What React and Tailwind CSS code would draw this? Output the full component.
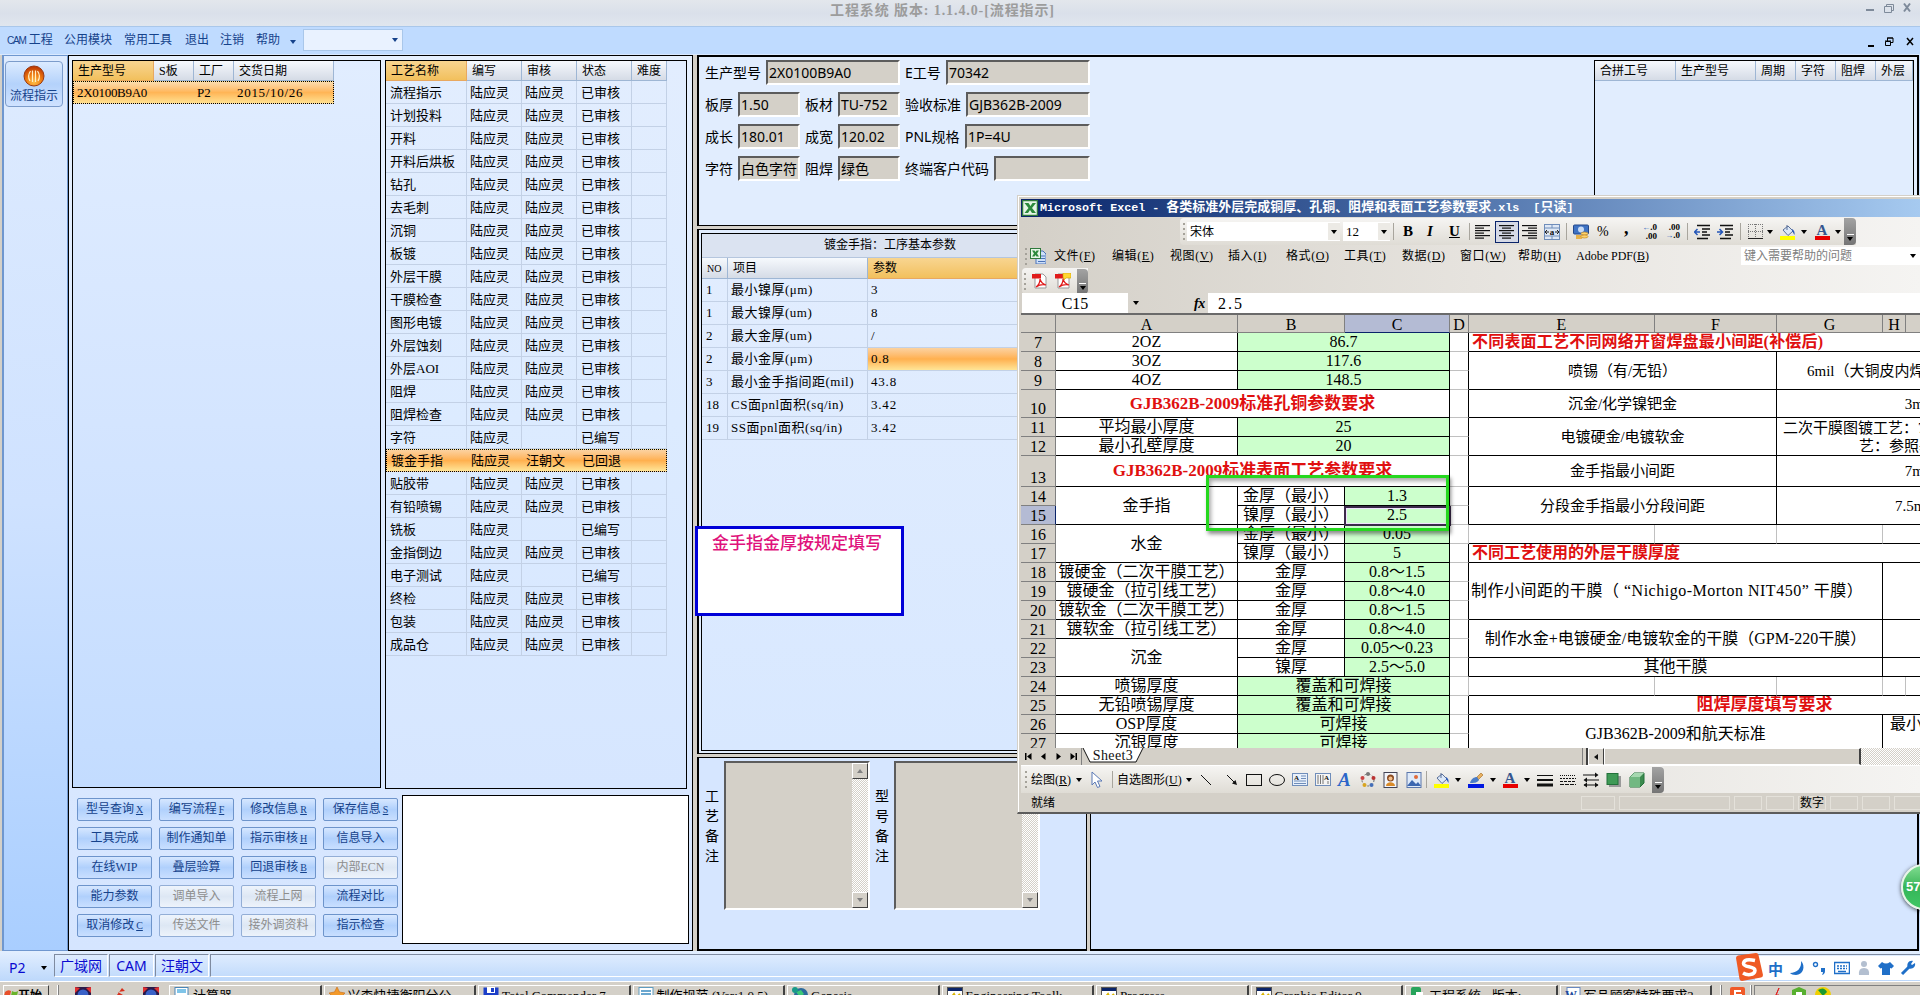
import React from 'react';

const processRows = [
    ['流程指示', '陆应灵', '陆应灵', '已审核'],
    ['计划投料', '陆应灵', '陆应灵', '已审核'],
    ['开料', '陆应灵', '陆应灵', '已审核'],
    ['开料后烘板', '陆应灵', '陆应灵', '已审核'],
    ['钻孔', '陆应灵', '陆应灵', '已审核'],
    ['去毛刺', '陆应灵', '陆应灵', '已审核'],
    ['沉铜', '陆应灵', '陆应灵', '已审核'],
    ['板镀', '陆应灵', '陆应灵', '已审核'],
    ['外层干膜', '陆应灵', '陆应灵', '已审核'],
    ['干膜检查', '陆应灵', '陆应灵', '已审核'],
    ['图形电镀', '陆应灵', '陆应灵', '已审核'],
    ['外层蚀刻', '陆应灵', '陆应灵', '已审核'],
    ['外层AOI', '陆应灵', '陆应灵', '已审核'],
    ['阻焊', '陆应灵', '陆应灵', '已审核'],
    ['阻焊检查', '陆应灵', '陆应灵', '已审核'],
    ['字符', '陆应灵', '', '已编写'],
    ['镀金手指', '陆应灵', '汪朝文', '已回退'],
    ['贴胶带', '陆应灵', '陆应灵', '已审核'],
    ['有铅喷锡', '陆应灵', '陆应灵', '已审核'],
    ['铣板', '陆应灵', '', '已编写'],
    ['金指倒边', '陆应灵', '陆应灵', '已审核'],
    ['电子测试', '陆应灵', '', '已编写'],
    ['终检', '陆应灵', '陆应灵', '已审核'],
    ['包装', '陆应灵', '陆应灵', '已审核'],
    ['成品仓', '陆应灵', '陆应灵', '已审核'],
];

const paramRows = [
    ['1', '最小镍厚(μm)', '3'],
    ['1', '最大镍厚(um)', '8'],
    ['2', '最大金厚(um)', '/'],
    ['2', '最小金厚(μm)', '0.8'],
    ['3', '最小金手指间距(mil)', '43.8'],
    ['18', 'CS面pnl面积(sq/in)', '3.42'],
    ['19', 'SS面pnl面积(sq/in)', '3.42'],
];

// label, access key, disabled
const actions = [
    ['型号查询', 'X'], ['编写流程', 'F'], ['修改信息', 'R'], ['保存信息', 'S'],
    ['工具完成'], ['制作通知单'], ['指示审核', 'H'], ['信息导入'],
    ['在线WIP'], ['叠层验算'], ['回退审核', 'B'], ['内部ECN', '', true],
    ['能力参数'], ['调单导入', '', true], ['流程上网', '', true], ['流程对比'],
    ['取消修改', 'C'], ['传送文件', '', true], ['接外调资料', '', true], ['指示检查'],
];

const excelMenus = [
    ['文件', 'F'], ['编辑', 'E'], ['视图', 'V'], ['插入', 'I'], ['格式', 'O'],
    ['工具', 'T'], ['数据', 'D'], ['窗口', 'W'], ['帮助', 'H'],
];

const G = 'bg-[#ccffcc] border-black';
const K = 'border-black';
const R = 'border-black text-[#e01010] font-bold text-[17px]';
const S = 'border-black text-[15px]';

// row, row span, column (A = 2), column span, text, classes
const cells = [
    [7, 1, 2, 1, '2OZ', K], [7, 1, 3, 2, '86.7', G],
    [8, 1, 2, 1, '3OZ', K], [8, 1, 3, 2, '117.6', G],
    [9, 1, 2, 1, '4OZ', K], [9, 1, 3, 2, '148.5', G],
    [10, 1, 2, 3, 'GJB362B-2009标准孔铜参数要求', R],
    [11, 1, 2, 1, '平均最小厚度', K], [11, 1, 3, 2, '25', G],
    [12, 1, 2, 1, '最小孔壁厚度', K], [12, 1, 3, 2, '20', G],
    [13, 1, 2, 3, 'GJB362B-2009标准表面工艺参数要求', R],
    [14, 2, 2, 1, '金手指', K],
    [14, 1, 3, 1, '金厚（最小）', K], [14, 1, 4, 1, '1.3', G],
    [15, 1, 3, 1, '镍厚（最小）', K], [15, 1, 4, 1, '2.5', G],
    [16, 2, 2, 1, '水金', K],
    [16, 1, 3, 1, '金厚（最小）', K], [16, 1, 4, 1, '0.05', G],
    [17, 1, 3, 1, '镍厚（最小）', K], [17, 1, 4, 1, '5', G],
    [18, 1, 2, 1, '镀硬金（二次干膜工艺）', K], [18, 1, 3, 1, '金厚', K], [18, 1, 4, 1, '0.8～1.5', G],
    [19, 1, 2, 1, '镀硬金（拉引线工艺）', K], [19, 1, 3, 1, '金厚', K], [19, 1, 4, 1, '0.8～4.0', G],
    [20, 1, 2, 1, '镀软金（二次干膜工艺）', K], [20, 1, 3, 1, '金厚', K], [20, 1, 4, 1, '0.8～1.5', G],
    [21, 1, 2, 1, '镀软金（拉引线工艺）', K], [21, 1, 3, 1, '金厚', K], [21, 1, 4, 1, '0.8～4.0', G],
    [22, 2, 2, 1, '沉金', K],
    [22, 1, 3, 1, '金厚', K], [22, 1, 4, 1, '0.05～0.23', G],
    [23, 1, 3, 1, '镍厚', K], [23, 1, 4, 1, '2.5～5.0', G],
    [24, 1, 2, 1, '喷锡厚度', K], [24, 1, 3, 2, '覆盖和可焊接', G],
    [25, 1, 2, 1, '无铅喷锡厚度', K], [25, 1, 3, 2, '覆盖和可焊接', G],
    [26, 1, 2, 1, 'OSP厚度', K], [26, 1, 3, 2, '可焊接', G],
    [27, 1, 2, 1, '沉银厚度', K], [27, 1, 3, 2, '可焊接', G],
    // right-hand tables
    [7, 1, 6, 5, '不同表面工艺不同网络开窗焊盘最小间距(补偿后)', 'border-black text-[#e01010] font-bold justify-start pl-[3px] tracking-[0.2px]'],
    [8, 2, 6, 2, '喷锡（有/无铅）', S], [8, 2, 8, 3, '6mil（大铜皮内焊盘除外）', 'border-black text-[15px] justify-start pl-[30px]'],
    [10, 1, 6, 2, '沉金/化学镍钯金', S], [10, 1, 8, 3, '3mil', S],
    [11, 2, 6, 2, '电镀硬金/电镀软金', S],
    [13, 1, 6, 2, '金手指最小间距', S], [13, 1, 8, 3, '7mil', S],
    [14, 2, 6, 2, '分段金手指最小分段间距', S], [14, 2, 8, 3, '7.5mil', 'border-black text-[15px] pr-2'],
    [16, 1, 6, 1, '', 'border-r-[#c0c0c0] border-b-black'], [16, 1, 7, 1, '', 'border-r-[#c0c0c0] border-b-black'],
    [16, 1, 8, 1, '', 'border-r-[#c0c0c0] border-b-black'], [16, 1, 9, 2, '', 'border-r-[#c0c0c0] border-b-black'],
    [17, 1, 6, 5, '不同工艺使用的外层干膜厚度', 'border-black text-[#e01010] font-bold justify-start pl-[3px]'],
    [18, 3, 6, 3, '制作小间距的干膜（ “Nichigo-Morton NIT450” 干膜）', 'border-black justify-start pl-0.5 tracking-[0.5px]'], [18, 3, 9, 2, '', K],
    [21, 2, 6, 3, '制作水金+电镀硬金/电镀软金的干膜（GPM-220干膜）', K], [21, 2, 9, 2, '', K],
    [23, 1, 6, 3, '其他干膜', K], [23, 1, 9, 2, '', K],
    [24, 1, 6, 1, '', 'border-r-[#c0c0c0] border-b-black'], [24, 1, 7, 1, '', 'border-r-[#c0c0c0] border-b-black'],
    [24, 1, 8, 1, '', 'border-r-[#c0c0c0] border-b-black'], [24, 1, 9, 1, '', 'border-r-[#c0c0c0] border-b-black'], [24, 1, 10, 1, '', 'border-b-black'],
    [25, 1, 6, 5, '阻焊厚度填写要求', R],
    [26, 2, 6, 3, 'GJB362B-2009和航天标准', K], [26, 1, 9, 2, '最小', 'border-white justify-start pl-[7px]'],
];

const rowNumbers = [7, 8, 9, 10, 11, 12, 13, 14, 15, 16, 17, 18, 19, 20, 21, 22, 23, 24, 25, 26, 27];

const columns = [
    ['A', 'w-[182px]'], ['B', 'w-[107px]'], ['C', 'w-[105px]'], ['D', 'w-[19px]'], ['E', 'w-[186px]'],
    ['F', 'w-[122px]'], ['G', 'w-[106px]'], ['H', 'w-[23px]'], ['', 'w-[155px]'],
];

const tasks = [
    ['calc', '计算器'], ['star', '兴森快捷衡阳分公'], ['disk', 'Total Commander 7.'], ['doc', '制作规范 (Ver:1.0.5)'],
    ['globe', 'Genesis'], ['win', 'Engineering Toolk'], ['win', 'Progress'], ['win', 'Graphic Editor 9.'],
    ['green', '工程系统 - 版本:'], ['word', '军品顾客特殊要求?'],
];

const Arrow = ({className = ''}) => (
    <svg className={`shrink-0 ${className}`} width="6" height="4" viewBox="0 0 6 4"><path d="M0 0h6L3 4z" fill="currentColor"/></svg>
);

const Sep = ({className = ''}) => <div className={`w-px h-[17px] shrink-0 bg-[#a8a59d] ${className}`}/>;

const Grip = ({className = ''}) => (
    <div className={`flex flex-col gap-[3px] shrink-0 ${className}`}>
        {[0, 1, 2, 3].map((i) => <div key={i} className="w-0.5 h-0.5 bg-[#a5a29a]"/>)}
    </div>
);

const EndCap = ({className = ''}) => (
    <div className={`shrink-0 rounded-r bg-gradient-to-b from-[#a3a3a3] to-[#757575] flex flex-col items-center justify-end pb-1 ${className}`}>
        <div className="w-[7px] h-px bg-white mb-0.5"/>
        <Arrow className="text-black"/>
    </div>
);

const Icon = ({className = '', children}) => (
    <svg className={`shrink-0 ${className}`} width="16" height="16" viewBox="0 0 16 16" fill="none">{children}</svg>
);

const AlignIcon = ({kind, className}) => (
    <Icon className={className}>
        {[1, 3.5, 6, 8.5, 11, 13.5].map((y, i) => {
            const w = i % 2 ? 9 : 15;
            const x = kind === 'left' ? 0 : kind === 'right' ? 15 - w : (15 - w) / 2;
            return <rect key={y} x={x} y={y} width={w} height="1.2" fill="#111"/>;
        })}
    </Icon>
);

const BucketIcon = ({className}) => (
    <Icon className={className}>
        <path d="M3 6l5-4 5 5-5 4.500z" fill="#dce8f8" stroke="#5a7099"/>
        <path d="M7 6V1" stroke="#5a7099"/>
        <path d="M12 5c2 1 3 3 2.500 6-1-1-1.500-3-2.500-4z" fill="#2a5bb8"/>
        <rect y="12" width="15" height="4" fill="#ffff00"/>
    </Icon>
);

const FontColorIcon = ({className}) => (
    <div className={`flex flex-col items-center w-4 h-4 shrink-0 ${className}`}>
        <span className="text-[15px] leading-[12px] font-bold text-[#35568f]">A</span>
        <div className="w-[15px] h-1 bg-[#e80000]"/>
    </div>
);

const ExcelIcon = ({className}) => (
    <Icon className={className}>
        <rect x="0.500" y="0.500" width="15" height="15" fill="#e6f5e6" stroke="#2f7a3c" strokeWidth="1.500"/>
        <path d="M2.500 3h4l2 3 2-3h3.500l-4 5 4 5h-4l-2-3-2 3H2.500l4-5z" fill="#2c8a3c"/>
    </Icon>
);

const WorkbookIcon = ({className}) => (
    <Icon className={className}>
        <path d="M6 3h7l3 3v10H6z" fill="#cfe0f8" stroke="#4a72b8"/>
        <path d="M11 8h4M11 10.500h4M8 13.500h7" stroke="#4a72b8"/>
        <rect x="0.500" y="0.500" width="10" height="10" fill="#e6f5e6" stroke="#2f7a3c"/>
        <path d="M2 2.500h2.500l1 1.500 1-1.500H9L7 5.500 9 8.500H6.500l-1-1.500-1 1.500H2l2-3z" fill="#2c8a3c"/>
    </Icon>
);

const PdfIcon = ({note, className}) => (
    <Icon className={className}>
        <path d="M3 1h8l3 3v11H3z" fill="#fff" stroke="#999"/>
        <rect y="1" width="9" height="4.500" fill="#e01b1b"/>
        <path d="M4 14c3-2 4-5 4-8 1 4 3 5 6 6-4-1-7 0-10 2z" stroke="#e01b1b" strokeWidth="1.200"/>
        {note && <path d="M8 0h8v5h-5l-2 2V5H8z" fill="#ffd732" stroke="#d0a000" strokeWidth="0.600"/>}
    </Icon>
);

const Field = ({label, value, className}) => (
    <div className={`flex items-center justify-between ${className}`}>
        <span className="shrink-0">{label}</span>
        {value}
    </div>
);

const Box = ({children, className}) => (
    <div className={`h-[25px] bg-[#d4d0c8] border-2 border-t-[#5c5c5c] border-l-[#5c5c5c] border-b-white border-r-white pl-px leading-[21px] whitespace-nowrap overflow-hidden ${className}`}>
        {children}
    </div>
);

const MemoBox = () => (
    <div className="w-[146px] h-[149px] bg-[#d4d0c8] border-2 border-t-[#5c5c5c] border-l-[#5c5c5c] border-b-white border-r-white flex justify-end">
        <div className="w-4 flex flex-col justify-between bg-[repeating-conic-gradient(#ffffff_0_25%,#d4d0c8_0_50%)] bg-[length:2px_2px]">
            <div className="h-4 bg-[#d4d0c8] border border-t-white border-l-white border-b-[#404040] border-r-[#404040] flex items-center justify-center text-[#808080]">
                <Arrow className="rotate-180"/>
            </div>
            <div className="h-4 bg-[#d4d0c8] border border-t-white border-l-white border-b-[#404040] border-r-[#404040] flex items-center justify-center text-[#808080]">
                <Arrow/>
            </div>
        </div>
    </div>
);

const VerticalLabel = ({text}) => (
    <div className="flex flex-col w-[14px] pt-[24px]">
        {text.split('').map((c) => <span key={c} className="h-5 leading-5">{c}</span>)}
    </div>
);

const Th = ({children, active, className}) => (
    <div className={`h-full flex items-center pl-[5px] border-r border-b overflow-hidden whitespace-nowrap ${active ? 'bg-gradient-to-b from-[#f8d590] to-[#f2c05c] border-[#e8a860]' : 'bg-gradient-to-b from-[#f6f9fd] to-[#d5dbe6] border-[#9eb6d4]'} ${className}`}>
        {children}
    </div>
);

const Sidebar = () => (
    <div className="w-[66px] shrink-0 border border-[#6f97cf] border-l-2 bg-gradient-to-b from-[#deebfe] via-[#cfe2ff] to-[#a9ceff] pt-[5px] px-px">
        <div className="w-[58px] h-[46px] rounded-sm border border-[#7c9ccb] bg-gradient-to-b from-[#dcebff] via-[#b4d2fb] to-[#cfe2ff] flex flex-col items-center pt-[3px] text-[#15428b] text-[12px]">
            <svg width="22" height="22" viewBox="0 0 22 22" className="shrink-0">
                <defs>
                    <radialGradient id="ball" cx="50%" cy="80%" r="80%">
                        <stop offset="0" stopColor="#ffc04a"/>
                        <stop offset="0.5" stopColor="#ee7a10"/>
                        <stop offset="1" stopColor="#b83000"/>
                    </radialGradient>
                </defs>
                <circle cx="11" cy="11" r="10" fill="url(#ball)" stroke="#9a3a10"/>
                <path d="M7 16Q4 11 7.500 6M9.500 17V5.500M12.500 17V5.500M15 16q3-5-.5-10" stroke="#fff0c8" strokeWidth="1.200" fill="none"/>
            </svg>
            <span className="leading-[18px]">流程指示</span>
        </div>
    </div>
);

const LeftPane = () => (
    <div className="w-[625px] shrink-0 border border-black bg-gradient-to-b from-[#e6f0fe] to-[#d5e5ff] pt-1 pl-[3px]">
        <div className="flex gap-1 text-[13px]">
            <div className="w-[309px] h-[728px] border border-black bg-gradient-to-b from-[#e1edff] via-[#d4e5ff] to-[#c3dcff]">
                <div className="flex h-5 w-[261px] text-[12px]">
                    <Th active className="w-[81px]">生产型号</Th>
                    <Th className="w-10">S板</Th>
                    <Th className="w-10">工厂</Th>
                    <Th className="w-[100px]">交货日期</Th>
                </div>
                <div className="flex items-center w-[261px] h-[23px] border border-dotted border-black bg-gradient-to-b from-[#fbdcae] via-[#ffb556] to-[#ffe08f] pl-[3px]">
                    <span className="w-[120px] tracking-[-0.3px]">2X0100B9A0</span>
                    <span className="w-10">P2</span>
                    <span className="tracking-[0.7px]">2015/10/26</span>
                </div>
            </div>
            <div className="w-[302px] h-[729px] border border-black bg-gradient-to-b from-[#e2edfe] via-[#dcebff] to-[#d6e6ff]">
                <div className="flex h-5 w-[281px] text-[12px]">
                    <Th active className="w-[81px]">工艺名称</Th>
                    <Th className="w-[55px]">编写</Th>
                    <Th className="w-[55px]">审核</Th>
                    <Th className="w-[55px]">状态</Th>
                    <Th className="w-[35px]">难度</Th>
                </div>
                {processRows.map((row, i) => (
                    <div
                        key={row[0]}
                        className={`flex w-[281px] h-[23px] ${i === 16 ? 'leading-[21px] border border-dotted border-black bg-gradient-to-b from-[#fbd2a0] via-[#ffb04e] to-[#ffe596]' : 'leading-[23px] divide-x divide-[#c3d1e6] border-b border-r border-[#c3d1e6]'}`}
                    >
                        <span className="w-[81px] pl-1">{row[0]}</span>
                        <span className="w-[55px] pl-[3px]">{row[1]}</span>
                        <span className="w-[55px] pl-[3px]">{row[2]}</span>
                        <span className="w-[55px] pl-1">{row[3]}</span>
                        <span/>
                    </div>
                ))}
            </div>
        </div>
        <div className="flex pt-[6px]">
            <div className="grid grid-cols-[repeat(4,75px)] auto-rows-[23px] gap-x-[7px] gap-y-[6px] pl-[5px] pt-[3px] text-[12px]">
                {actions.map(([label, hotkey, disabled]) => (
                    <button
                        key={label}
                        className={`rounded-xs border whitespace-nowrap leading-[19px] ${disabled ? 'border-[#93aed6] bg-gradient-to-b from-[#eef4fc] via-[#dde7f4] to-[#edf3fb] text-[#8d8d8d]' : 'border-[#6d94cb] bg-gradient-to-b from-[#d6e7ff] via-[#b0d0fc] to-[#c9dfff] text-[#15428b]'}`}
                    >
                        {label}{hotkey && <span className="underline ml-0.5 text-[10px]">{hotkey}</span>}
                    </button>
                ))}
            </div>
            <div className="w-[287px] h-[149px] ml-1 bg-white border border-black"/>
        </div>
    </div>
);

const InfoPanel = () => (
    <div className="h-[171px] flex justify-between border-2 border-b border-black bg-[#e1edfe] pt-[3px] pr-[3px] text-[14px] font-['Noto_Sans','Noto_Sans_CJK_SC',sans-serif]">
        <div className="flex flex-col gap-[7px] pl-[6px] w-[391px]">
            <div className="flex gap-[5px]">
                <Field className="w-[195px]" label="生产型号" value={<Box className="w-[134px]">2X0100B9A0</Box>}/>
                <Field className="w-[185px]" label="E工号" value={<Box className="w-[144px]">70342</Box>}/>
            </div>
            <div className="flex gap-[5px]">
                <Field className="w-[95px]" label="板厚" value={<Box className="w-[62px]">1.50</Box>}/>
                <Field className="w-[95px]" label="板材" value={<Box className="w-[62px]">TU-752</Box>}/>
                <Field className="w-[185px]" label="验收标准" value={<Box className="w-[124px]">GJB362B-2009</Box>}/>
            </div>
            <div className="flex gap-[5px]">
                <Field className="w-[95px]" label="成长" value={<Box className="w-[62px]">180.01</Box>}/>
                <Field className="w-[95px]" label="成宽" value={<Box className="w-[62px]">120.02</Box>}/>
                <Field className="w-[185px]" label="PNL规格" value={<Box className="w-[125px]">1P=4U</Box>}/>
            </div>
            <div className="flex gap-[5px]">
                <Field className="w-[95px]" label="字符" value={<Box className="w-[62px]">白色字符</Box>}/>
                <Field className="w-[95px]" label="阻焊" value={<Box className="w-[62px]">绿色</Box>}/>
                <Field className="w-[185px]" label="终端客户代码" value={<Box className="w-[96px]"/>}/>
            </div>
        </div>
        <div className="w-[320px] h-[160px] border border-black text-[12px] font-['Liberation_Serif','Noto_Sans_CJK_SC',serif]">
            <div className="flex h-5">
                <Th className="w-[81px]">合拼工号</Th>
                <Th className="w-20">生产型号</Th>
                <Th className="w-10">周期</Th>
                <Th className="w-10">字符</Th>
                <Th className="w-10">阻焊</Th>
                <Th className="flex-1">外层</Th>
            </div>
        </div>
    </div>
);

const ParamPanel = () => (
    <div className="h-[525px] border-2 border-y border-black bg-[#e1edfe] pt-[3px] pl-0.5 text-[13px]">
        <div className="w-[1210px] h-[518px] border border-black bg-gradient-to-b from-[#e2edfe] to-[#d8e8ff]">
            <div className="w-[376px] h-6 text-center text-[12px] leading-[23px] bg-[#dbe3f1] border-b border-[#b5c6de]">镀金手指：工序基本参数</div>
            <div className="flex w-[376px] h-[21px] text-[12px]">
                <Th className="w-[26px]"><span className="text-[10px]">NO</span></Th>
                <Th className="w-[140px]">项目</Th>
                <Th active className="w-[210px]">参数</Th>
            </div>
            {paramRows.map(([no, name, value], i) => (
                <div key={name} className="flex w-[376px] h-[23px] leading-[22px] divide-x divide-[#c3d1e6] border-b border-[#c3d1e6] whitespace-nowrap">
                    <span className="w-[26px] pl-1">{no}</span>
                    <span className="w-[140px] pl-[3px] tracking-[0.5px]">{name}</span>
                    <span className={`w-[210px] pl-[3px] tracking-[0.8px] ${i === 3 ? 'bg-gradient-to-b from-[#fbd2a0] via-[#ffb04e] to-[#ffe596]' : ''}`}>{value}</span>
                </div>
            ))}
        </div>
    </div>
);

const MemoPanels = () => (
    <div className="flex gap-[3px] flex-1 bg-[#d4d0c8]">
        <div className="w-[390px] flex border-2 border-t border-r border-black bg-[#d6e6ff] pl-[6px] pt-[3px] text-[14px] text-black font-['Noto_Sans_CJK_SC',sans-serif]">
            <VerticalLabel text="工艺备注"/>
            <div className="pl-[5px] pr-[5px]"><MemoBox/></div>
            <VerticalLabel text="型号备注"/>
            <div className="pl-[5px]"><MemoBox/></div>
        </div>
        <div className="flex-1 border-2 border-l border-black bg-[#d6e6ff]"/>
    </div>
);

const Sheet = () => (
    <div className="h-[435px] overflow-hidden bg-white text-[16px]">
        <div className="flex h-5 w-[1040px] border-t-2 border-[#6a6a6a] bg-[#d4d0c8] leading-[19px] text-center">
            <div className="w-[35px] shrink-0 border-r border-b border-[#808080]"/>
            {columns.map(([name, width]) => (
                <div key={name} className={`shrink-0 border-r border-b border-[#808080] ${name === 'C' ? 'bg-[#b4bbd4] border-b-[#0a246a]' : ''} ${width}`}>{name}</div>
            ))}
        </div>
        <div className="grid grid-cols-[35px_182px_107px_105px_19px_186px_122px_106px_23px_155px] grid-rows-[19px_19px_19px_28px_19px_19px_31px_repeat(14,19px)] w-[1040px]">
            {rowNumbers.map((n) => (
                <div
                    key={n}
                    style={{gridRow: n - 6, gridColumn: 1}}
                    className={`flex items-end justify-center border-r border-b border-[#808080] leading-[17px] ${n === 15 ? 'bg-[#b4bbd4] border-r-[#0a246a]' : 'bg-[#d4d0c8]'}`}
                >
                    {n}
                </div>
            ))}
            {rowNumbers.map((n) => (
                <div
                    key={`d${n}`}
                    style={{gridRow: n - 6, gridColumn: 5}}
                    className={`border-r border-b border-b-[#c0c0c0] ${n === 16 || n === 24 ? 'border-r-[#c0c0c0]' : 'border-r-black'}`}
                />
            ))}
            {cells.map(([row, rowSpan, col, colSpan, text, cls]) => (
                <div
                    key={`${row}-${col}`}
                    style={{gridRow: `${row - 6} / span ${rowSpan}`, gridColumn: `${col} / span ${colSpan}`}}
                    className={`flex items-center justify-center border-r border-b whitespace-nowrap overflow-hidden leading-[18px] ${cls}`}
                >
                    {text}
                </div>
            ))}
            <div className="row-start-5 row-span-2 col-start-8 col-span-3 border-b border-black text-[15px] leading-[21px] whitespace-nowrap">
                <div className="pl-[6px] h-[18px]">二次干膜图镀工艺：7mil</div>
                <div className="pl-[82px] h-[18px]">艺：参照基铜</div>
            </div>
        </div>
    </div>
);

const FormatBar = () => (
    <div className="h-[29px] flex items-center text-[12px]">
        <div className="ml-[159px] h-[27px] w-[676px] flex items-center bg-gradient-to-b from-[#f6f5f3] to-[#dfdcd5] rounded-l">
            <Grip className="ml-[3px]"/>
            <div className="ml-0.5 w-[153px] shrink-0 h-[19px] bg-white flex items-center justify-between pl-[3px]">
                宋体
                <span className="w-3 h-[17px] bg-[#eceae5] flex items-center justify-center"><Arrow/></span>
            </div>
            <div className="ml-[3px] w-[47px] shrink-0 h-[19px] bg-white flex items-center justify-between pl-[3px] text-[13px]">
                12
                <span className="w-3 h-[17px] bg-[#eceae5] flex items-center justify-center"><Arrow/></span>
            </div>
            <Sep className="ml-[3px]"/>
            <b className="ml-[9px] w-4 text-[15px]">B</b>
            <b className="ml-[8px] w-4 text-[15px] italic">I</b>
            <b className="ml-[6px] w-4 text-[15px] underline">U</b>
            <Sep className="ml-1"/>
            <AlignIcon kind="left" className="ml-[5px]"/>
            <span className="ml-1 w-6 h-[22px] border border-[#0a246a] bg-[#d5d9e6] flex items-center justify-center shrink-0"><AlignIcon kind="center"/></span>
            <AlignIcon kind="right" className="ml-[3px]"/>
            <Icon className="ml-1.5">
                <rect x="0.500" y="0.500" width="15" height="15" fill="#dfe8f5" stroke="#6f8dba"/>
                <path d="M0 4h16M0 12h16M8 0v4M8 12v4" stroke="#6f8dba"/>
                <path d="M1 8h4M11 8h4M3 6L1 8l2 2M13 6l2 2-2 2" stroke="#222"/>
                <text x="8" y="11" fontSize="9" fontWeight="bold" textAnchor="middle" fill="#111">a</text>
            </Icon>
            <Sep className="ml-1.5"/>
            <Icon className="ml-1.5">
                <rect x="0.500" y="1" width="15" height="9" rx="1" fill="#3f73c4" stroke="#25488a"/>
                <circle cx="8" cy="5.500" r="3" fill="#c8dbf5"/>
                <rect x="3" y="11" width="6" height="4" fill="#e8b24a"/>
                <ellipse cx="11.500" cy="9.500" rx="3.500" ry="1.500" fill="#ffd36a" stroke="#b57a1c" strokeWidth="0.600"/>
                <ellipse cx="11.500" cy="12.500" rx="3.500" ry="1.500" fill="#ffd36a" stroke="#b57a1c" strokeWidth="0.600"/>
            </Icon>
            <span className="ml-[8px] w-3 shrink-0 text-[14px]">%</span>
            <b className="ml-[15px] w-2 shrink-0 text-[18px] leading-none -mt-2">,</b>
            <div className="ml-[9px] w-4 shrink-0 text-[9px] leading-[8px] font-bold text-right"><span className="text-[8px] text-[#2456b8]">←</span>.0<br/>.00</div>
            <div className="ml-[7px] w-4 shrink-0 text-[9px] leading-[8px] font-bold text-right">.00<br/><span className="text-[8px] text-[#2456b8]">→</span>.0</div>
            <Sep className="ml-[7px]"/>
            <Icon className="ml-1.5">
                <path d="M3 1.500h13M8 5h8M8 8h5M8 11h8M3 14.500h11" stroke="#111" strokeWidth="1.500"/>
                <path d="M6 8H1M3.500 5L0.500 8l3 3" stroke="#2456b8" strokeWidth="1.500"/>
            </Icon>
            <Icon className="ml-[7px]">
                <path d="M3 1.500h13M8 5h8M8 8h5M8 11h8M3 14.500h11" stroke="#111" strokeWidth="1.500"/>
                <path d="M0 8h5M2.500 5l3 3-3 3" stroke="#2456b8" strokeWidth="1.500"/>
            </Icon>
            <Sep className="ml-[7px]"/>
            <Icon className="ml-[7px]">
                <path d="M0.500 0v15M7.500 0v15M14.500 0v15M0 0.500h15M0 7.500h15" stroke="#777" strokeDasharray="1 1"/>
                <path d="M0 14.500h15" stroke="#222"/>
            </Icon>
            <Arrow className="ml-[3px]"/>
            <BucketIcon className="ml-[7px]"/>
            <Arrow className="ml-[5px]"/>
            <FontColorIcon className="ml-[7px]"/>
            <Arrow className="ml-[5px]"/>
            <EndCap className="ml-auto w-3 h-[27px]"/>
        </div>
    </div>
);

const DrawBar = () => (
    <div className="h-[27px] w-[643px] flex items-center text-[12px] bg-gradient-to-b from-[#f6f5f3] to-[#dfdcd5] rounded-r">
        <Grip className="ml-1"/>
        <span className="ml-1 w-[42px]">绘图(<u>R</u>)</span>
        <Arrow className="ml-[3px]"/>
        <svg className="ml-2 shrink-0" width="14" height="18" viewBox="0 0 14 18"><path d="M2 1v13l3-3 2.500 5.500 2.500-1L7.500 10H12z" fill="#fff" stroke="#5a79b5"/></svg>
        <Sep className="ml-2"/>
        <span className="ml-1 w-[65px]">自选图形(<u>U</u>)</span>
        <Arrow className="ml-1"/>
        <Icon className="ml-1.5"><path d="M3 3l10 10" stroke="#111"/></Icon>
        <Icon className="ml-2.5"><path d="M3 3l8 8" stroke="#111"/><path d="M13 13l-5-1.500L11.500 8z" fill="#111"/></Icon>
        <Icon className="ml-1.5"><rect x="0.500" y="2.500" width="15" height="11" stroke="#111"/></Icon>
        <Icon className="ml-[7px]"><ellipse cx="8" cy="8" rx="7.500" ry="5.500" stroke="#111"/></Icon>
        <Icon className="ml-[7px]">
            <rect x="0.500" y="1.500" width="15" height="12" fill="#e8f0fb" stroke="#6f8dba"/>
            <path d="M9 4h5M9 6.500h5M2 9h12M2 11.500h12" stroke="#6f8dba"/>
            <text x="2" y="8" fontSize="7" fontWeight="bold" fill="#111">A</text>
        </Icon>
        <Icon className="ml-[7px]">
            <rect x="0.500" y="1.500" width="15" height="12" fill="#f4f4f4" stroke="#6f8dba"/>
            <path d="M3 3v9M5.500 3v9M8 3v9M13 9v3" stroke="#777"/>
            <text x="9" y="8" fontSize="7" fontWeight="bold" fill="#111">A</text>
        </Icon>
        <span className="ml-[7px] w-4 text-[19px] leading-none font-bold italic text-[#2c66c9]">A</span>
        <Icon className="ml-1.5">
            <circle cx="8" cy="8" r="6" stroke="#666" strokeDasharray="2 2"/>
            <circle cx="8" cy="2" r="2" fill="#777"/><circle cx="2.500" cy="6" r="2" fill="#c44"/>
            <circle cx="13.500" cy="6" r="2" fill="#b33"/><circle cx="4.500" cy="13" r="2" fill="#d9a520"/><circle cx="11.500" cy="13" r="2" fill="#456fb8"/>
        </Icon>
        <Icon className="ml-[7px]">
            <rect x="1" y="0.500" width="13" height="15" fill="#f3f5fa" stroke="#445"/>
            <circle cx="7.500" cy="6" r="3.500" fill="#8a4a20"/><circle cx="7.500" cy="6.500" r="2" fill="#f4bf8a"/>
            <path d="M3 14c0-5 9-5 9 0z" fill="#d98a28"/>
        </Icon>
        <Icon className="ml-[7px]">
            <rect x="1" y="0.500" width="14" height="15" fill="#dfeaf9" stroke="#5b77ab"/>
            <path d="M1 14l5-6 4 4 2-2 3 4z" fill="#3c67b0"/><circle cx="10" cy="5" r="2" fill="#e06a3a"/>
        </Icon>
        <Sep className="ml-1"/>
        <BucketIcon className="ml-[7px]"/>
        <Arrow className="ml-[5px]"/>
        <Icon className="ml-[7px]">
            <path d="M9 5l4-4 2 2-5 5z" fill="#e8b060" stroke="#a06a20" strokeWidth="0.600"/>
            <path d="M2 11c1-4 4-6 7-6l2 3c-2 3-5 3-9 3z" fill="#4a7cc8"/>
            <rect y="12" width="16" height="4" fill="#0018e0"/>
        </Icon>
        <Arrow className="ml-1.5"/>
        <FontColorIcon className="ml-1.5"/>
        <Arrow className="ml-1.5"/>
        <Icon className="ml-[7px]"><path d="M0 3.500h16" stroke="#111"/><path d="M0 8h16" stroke="#111" strokeWidth="2"/><path d="M0 13h16" stroke="#111" strokeWidth="3"/></Icon>
        <Icon className="ml-[7px]"><path d="M0 3.500h16" stroke="#111" strokeDasharray="1 1"/><path d="M0 6.500h16" stroke="#111" strokeDasharray="2 1"/><path d="M0 9.500h16" stroke="#111" strokeDasharray="3 1"/><path d="M0 12.500h16" stroke="#111" strokeDasharray="4 1"/></Icon>
        <Icon className="ml-[7px]">
            <path d="M0 3h14M2 8h14M1 13h14" stroke="#111" strokeWidth="1.200"/>
            <path d="M12 0.500L15.500 3 12 5.500zM4 5.500L0.500 8 4 10.500zM4 10.500L0.500 13 4 15.500zM12 10.500l3.500 2.500-3.500 2.500z" fill="#111"/>
        </Icon>
        <Icon className="ml-[7px]"><rect x="3" y="4" width="12" height="11" fill="#9a9a9a"/><rect x="1" y="1.500" width="11" height="11" fill="#3f9a56" stroke="#23703a"/></Icon>
        <Icon className="ml-[7px]"><path d="M1 5l4-4h10v10l-4 4H1z" fill="#3b8a4e" stroke="#23703a"/><path d="M1 5l4-4h10l-4 4z" fill="#a6d8b0"/><rect x="1" y="5" width="10" height="10" fill="#72b882"/></Icon>
        <EndCap className="ml-auto w-3 h-[26px]"/>
    </div>
);

const ExcelWindow = () => (
    <div className="absolute left-[1017px] top-[195px] w-[903px] h-[619px] overflow-hidden bg-[#d4d0c8] border-t border-l border-[#d4d0c8] border-b-2 border-b-[#5c5c5c] shadow-[inset_1px_1px_0_#ffffff] pt-[3px] pl-[3px]">
        <div className="h-[18px] flex items-center bg-gradient-to-r from-[#0a246a] to-[#a6caf0] text-white font-bold text-[13px] pl-px whitespace-nowrap">
            <ExcelIcon className="mr-0.5"/>
            <span className="font-['Liberation_Mono','Noto_Sans_CJK_SC',monospace] text-[13px]">
                <span className="text-[11.7px]">Microsoft Excel - </span>各类标准外层完成铜厚、孔铜、阻焊和表面工艺参数要求<span className="text-[11.7px]">.xls&nbsp; [</span>只读<span className="text-[11.7px]">]</span>
            </span>
        </div>
        <div className="h-[96px] bg-gradient-to-r from-[#d4d0c8] via-[#e6e3de] to-[#f5f4f2]">
            <FormatBar/>
            <div className="h-[20px] flex items-center text-[12px] whitespace-nowrap">
                <Grip className="ml-1"/>
                <WorkbookIcon className="ml-[3px] mr-[8px]"/>
                {excelMenus.map(([label, key]) => (
                    <span key={key} className="w-[58px] shrink-0 tracking-[0.6px]">{label}(<u>{key}</u>)</span>
                ))}
                <span className="shrink-0">Adobe PDF(<u>B</u>)</span>
                <div className="ml-auto w-[179px] shrink-0 h-[18px] bg-white flex items-center justify-between text-[#808080] pl-[3px] pr-1">
                    键入需要帮助的问题<Arrow className="text-black"/>
                </div>
            </div>
            <div className="h-[27px] flex">
                <div className="ml-px w-[66px] h-[26px] mt-0.5 flex items-center bg-gradient-to-b from-[#f6f5f3] to-[#dfdcd5] rounded-l">
                    <Grip className="ml-0.5"/>
                    <PdfIcon className="ml-[6px]"/>
                    <PdfIcon note className="ml-[7px]"/>
                    <EndCap className="ml-auto w-[11px] h-[25px]"/>
                </div>
            </div>
            <div className="h-5 flex items-center text-[16px]">
                <div className="ml-px w-[106px] h-5 leading-[21px] bg-white text-center">C15</div>
                <Arrow className="ml-[5px]"/>
                <i className="ml-auto w-[14px] text-[14px] font-bold tracking-tight">fx</i>
                <div className="w-[712px] h-5 leading-[21px] bg-white pl-[10px] tracking-[2px]">2.5</div>
            </div>
        </div>
        <Sheet/>
        <div className="h-[17px] flex items-stretch text-[#111]">
            <div className="w-[61px] flex items-center justify-around border-r border-[#808080] text-black">
                <svg width="7" height="7"><path d="M0 0h1.500v7H0zM6.500 0v7L2 3.500z"/></svg>
                <svg width="7" height="7"><path d="M5.500 0v7L1 3.500z"/></svg>
                <svg width="7" height="7"><path d="M1.500 0v7L6 3.500z"/></svg>
                <svg width="7" height="7"><path d="M5.500 0H7v7H5.500zM0.500 0v7L5 3.500z"/></svg>
            </div>
            <div className="relative w-[62px] h-4">
                <svg className="absolute inset-0" width="62" height="16"><path d="M1 0l7 14h46l7-14" fill="#fff" stroke="#111"/></svg>
                <span className="relative block text-center text-[14px] leading-[15px] tracking-[0.4px]">Sheet3</span>
            </div>
            <div className="ml-auto w-1.5 border-l border-r-2 border-l-[#808080] border-r-[#404040]"/>
            <div className="w-4 border border-white border-r-[#404040] flex items-center justify-center"><Arrow className="rotate-90"/></div>
            <div className="w-[257px] bg-[#d4d0c8] border border-white border-r-2 border-r-[#404040]"/>
            <div className="w-[59px] bg-[repeating-conic-gradient(#ffffff_0_25%,#d4d0c8_0_50%)] bg-[length:2px_2px]"/>
        </div>
        <div className="h-[28px] bg-gradient-to-r from-[#d4d0c8] to-[#f5f4f2] border-t border-white">
            <DrawBar/>
        </div>
        <div className="h-[20px] flex items-center text-[12px]">
            <span className="pl-2.5">就绪</span>
            <div className="ml-auto flex gap-1 h-[14px] leading-[13px]">
                <div className="w-[34px] border border-[#e4e1da]"/>
                <div className="w-[111px] border border-[#e4e1da]"/>
                <div className="w-7 border border-[#e4e1da]"/>
                <div className="w-7 border border-[#e4e1da]"/>
                <div className="w-7 border border-[#e4e1da] text-center whitespace-nowrap">数字</div>
                <div className="w-7 border border-[#e4e1da]"/>
                <div className="w-7 border border-[#e4e1da]"/>
                <div className="w-[26px] border border-r-0 border-[#e4e1da]"/>
            </div>
        </div>
        {/* active cell frame */}
        <div className="absolute left-[326px] top-[310px] w-[107px] h-[20px] border-2 border-[#3b2a4a] outline outline-1 -outline-offset-3 outline-[#f0e0ff]"/>
    </div>
);

const TaskIcon = ({kind}) => (
    <Icon className="mt-px">
        {kind === 'calc' && <><rect x="1" y="0.500" width="13" height="15" fill="#fff" stroke="#4a86b8"/><rect x="3" y="2" width="9" height="4" fill="#7fc4e8"/><path d="M3 9h9M3 12h9" stroke="#c8a860"/></>}
        {kind === 'star' && <path d="M8 0l2.500 5 5.500 1-4 4 1 6-5-3-5 3 1-6-4-4 5.500-1z" fill="#f2992a" stroke="#c96a10" strokeWidth="0.600"/>}
        {kind === 'disk' && <><rect x="0.500" y="0.500" width="15" height="15" fill="#1c3fc8"/><rect x="4" y="0" width="8" height="6" fill="#fff"/><rect x="8" y="1" width="3" height="4" fill="#1c3fc8"/></>}
        {kind === 'doc' && <><rect x="1" y="0.500" width="14" height="15" fill="#fff" stroke="#5f9cc0"/><path d="M3 4h10M3 7h10M3 10h10" stroke="#3a8ac0" strokeWidth="1.500"/></>}
        {kind === 'globe' && <><circle cx="9" cy="8" r="7" fill="#2b6a9c"/><path d="M4 5l5-2 3 4-4 3z" fill="#3cc878"/><circle cx="3" cy="3" r="3" fill="#189a88"/></>}
        {kind === 'win' && <><rect x="0.500" y="0.500" width="15" height="15" fill="#fff" stroke="#555"/><rect x="1" y="1" width="14" height="3" fill="#0a246a"/><path d="M3 12l4-5 2 4 4-4" stroke="#d8b400" strokeWidth="2"/></>}
        {kind === 'green' && <><rect x="1" y="0" width="10" height="16" rx="2" fill="#28a45c"/><path d="M6 5h7v7H6z" fill="#fff"/></>}
        {kind === 'word' && <><rect x="2" y="0.500" width="13" height="15" fill="#fff" stroke="#6888c0"/><text x="0" y="12" fontSize="12" fontWeight="bold" fill="#204a9c">W</text></>}
    </Icon>
);

const Taskbar = () => (
    <div className="h-[15px] overflow-hidden bg-[#d4d0c8] border-t border-white flex items-start pt-[3px] text-[13px] leading-[20px] whitespace-nowrap">
        <div className="w-[46px] h-5 ml-[3px] flex border border-t-white border-l-white border-r-[#404040] shrink-0 font-bold text-[12px]">
            <Icon className="mt-0.5 -mr-0.5"><path d="M1 4q3-3 6-1L6 8Q3 6 0 8z" fill="#e8502a"/><path d="M8 3q3 2 6 0l-1 5q-3 2-6 0z" fill="#6ab42a"/><path d="M0 9q3-2 6 0l-1 5q-3-2-6 0z" fill="#2a78d8"/></Icon>
            开始
        </div>
        <div className="w-0.5 h-5 ml-2 bg-white border-r border-[#808080]"/>
        <Icon className="ml-[16px] mt-0.5"><rect width="16" height="16" fill="#2a1a4a"/><circle cx="8" cy="8" r="5.500" fill="#3a62c8"/><path d="M0 0l5 1-5 5zM16 0l-5 1 5 5z" fill="#e03030"/></Icon>
        <Icon className="ml-[19px] mt-0.5"><path d="M2 15L12 1l3 3-7 1 5 3-6 8z" fill="#d8301c"/></Icon>
        <Icon className="ml-[17px] mt-0.5"><rect width="16" height="16" fill="#2a1a4a"/><circle cx="8" cy="8" r="5.500" fill="#3a62c8"/><path d="M0 0l5 1-5 5zM16 0l-5 1 5 5z" fill="#e03030"/></Icon>
        <div className="ml-[10px] flex gap-0.5">
            {tasks.map(([kind, label]) => (
                <div key={label} className="w-[152.500px] h-5 flex gap-[3px] pl-1 border border-t-white border-l-white border-r-2 border-r-[#404040] overflow-hidden">
                    <TaskIcon kind={kind}/>{label}
                </div>
            ))}
        </div>
        <div className="ml-2 w-0.5 h-5 bg-white border-r border-[#808080]"/>
        <Icon className="ml-2 mt-0.5"><rect width="15" height="16" rx="2" fill="#f05a28"/><path d="M11 4H5v4h6v4H4" stroke="#fff" strokeWidth="2"/></Icon>
        <div className="ml-1 w-0.5 h-5 bg-white border-r border-[#808080]"/>
        <div className="ml-0.5 flex-1 h-5 border-t border-l border-[#808080] flex gap-2 pl-3 pt-px">
            <Icon><path d="M6 15L12 1 9 8l3 0z" fill="#e02020" stroke="#e02020"/></Icon>
            <Icon><path d="M8 0l7 3v8l-7 5-7-5V3z" fill="#58b030"/><rect x="5" y="5" width="6" height="7" fill="#fff"/></Icon>
            <Icon><circle cx="8" cy="8" r="8" fill="#f0d000"/><path d="M3 3q6-4 9 2l-4 4z" fill="#1a9a30"/></Icon>
        </div>
    </div>
);

const ImeBar = () => (
    <div className="absolute left-[1735px] top-[953px] w-[185px] h-7 flex items-center text-[#1f6fc8]">
        <svg className="relative z-10 shrink-0" width="28" height="28" viewBox="0 0 28 28">
            <path d="M1 5q0-2 2-2.500L21 0q2 0 2.500 2L28 22q0 2-2 2.500L7 28q-2 0-2.500-2z" fill="#ef5a24"/>
            <path d="M20 7.500Q9 5 8.500 10.500C8.500 15 20 12.500 20 17.500 19.500 22.500 12 22.500 8 20" fill="none" stroke="#fff" strokeWidth="3.500"/>
        </svg>
        <div className="-ml-2 h-[24px] mt-0.5 flex-1 bg-white flex items-center pl-[13px] text-[15px] font-bold font-['Noto_Sans_CJK_SC',sans-serif]">
            <span className="w-[22px] shrink-0 leading-none">中</span>
            <Icon className="mr-1.5"><path d="M11 1c5 5 2 14-5 14-3 0-5-1-6-2 7 0 12-5 11-12z" fill="#1f6fc8"/></Icon>
            <Icon className="mr-1.5"><circle cx="3.500" cy="4.500" r="2" stroke="#1f6fc8" strokeWidth="1.400"/><path d="M9 8h4v3c0 2-1 3.500-3 4 .5-1 1-2 1-3H9z" fill="#1f6fc8"/></Icon>
            <Icon className="mr-1.5"><rect x="0.500" y="2.500" width="15" height="11" stroke="#1f6fc8" strokeWidth="1.500"/><path d="M3 6h10M3 8.500h10" stroke="#1f6fc8" strokeWidth="1.500" strokeDasharray="2 1"/><path d="M4 11.500h8" stroke="#1f6fc8" strokeWidth="1.500"/></Icon>
            <Icon className="mr-1.5"><circle cx="8" cy="4" r="3" fill="#b3bfd0"/><path d="M3 15q-1-7 5-7t5 7z" fill="#b3bfd0"/></Icon>
            <Icon className="mr-1.5"><path d="M4 2q4 3 8 0l4 4-2.500 2.500L12 8v7H4V8l-1.500.5L0 6z" fill="#1f6fc8"/></Icon>
            <Icon><path d="M2 14l7-7" stroke="#1f6fc8" strokeWidth="3"/><path d="M14 2l-3 3M8 8C6 4 9 0 13 1l-2 3 1 1 3-2c1 4-3 7-7 5z" fill="#1f6fc8"/></Icon>
        </div>
    </div>
);

export default function App() {
    return (
        <div lang="zh-CN" className="relative w-[1920px] h-[995px] overflow-hidden flex flex-col bg-[#bfdbff] text-black font-['Liberation_Serif','Noto_Sans_CJK_SC',serif]">
            {/* Title bar */}
            <div className="h-[27px] shrink-0 relative bg-gradient-to-b from-[#e3e7ec] via-[#dae0ea] to-[#e0e6ee] border-b border-[#a9c7ea] flex justify-center text-[14px] leading-[21px] font-bold text-[#9c9c9c]">
                <span className="pr-[35px] tracking-[0.9px]">工程系统 版本: 1.1.4.0-[流程指示]</span>
                <svg className="absolute right-1 top-0.5" width="50" height="14" viewBox="0 0 50 14" fill="none" stroke="#7e8a9a">
                    <path d="M0 8h8" strokeWidth="2"/>
                    <path d="M18.500 4.500h7v6h-7zM20.500 4V2.500h7v6H26"/>
                    <path d="M38 1.500l6 8M44 1.500l-6 8" strokeWidth="2"/>
                </svg>
            </div>

            {/* Menu */}
            <div className="h-[28px] shrink-0 flex items-center text-[12px] text-[#15428b] pl-[7px] pb-px border-b border-[#d9e9ff]">
                <span className="w-[57px]"><span className="text-[10px] tracking-[-1.2px] font-['Liberation_Sans',sans-serif]">CAM</span> 工程</span>
                <span className="w-[60px]">公用模块</span>
                <span className="w-[61px]">常用工具</span>
                <span className="w-[35px]">退出</span>
                <span className="w-[36px]">注销</span>
                <span className="w-[34px]">帮助</span>
                <Arrow className="mt-1"/>
                <div className="ml-[7px] w-[100px] h-[22px] bg-[#e9f2ff] border border-[#a9c7ea] flex items-center justify-end pr-1"><Arrow/></div>
                <svg className="ml-auto mr-px mt-1" width="52" height="12" viewBox="0 0 52 12" fill="none" stroke="#000">
                    <path d="M1 10h6" strokeWidth="2"/>
                    <path d="M18.500 5.500h5v4h-5zM20.500 5V2h5.500v4.500H24M18 5h6M20 2h6"/>
                    <path d="M40 2l6 7M46 2l-6 7" strokeWidth="1.500"/>
                </svg>
            </div>

            {/* Workspace */}
            <div className="h-[896px] shrink-0 flex pl-0.5 bg-[#d4d0c8]">
                <Sidebar/>
                <LeftPane/>
                <div className="ml-1 w-[1222px] flex flex-col gap-[3px]">
                    <InfoPanel/>
                    <ParamPanel/>
                    <MemoPanels/>
                </div>
                <div className="flex-1 bg-[#c9dffd]"/>
            </div>

            {/* Status bar */}
            <div className="h-[30px] shrink-0 bg-gradient-to-b from-[#e3efff] to-[#bdd8fb] pt-[3px] flex text-[#0a0ad0] text-[14px] leading-[21px] font-['Noto_Sans','Noto_Sans_CJK_SC',sans-serif]">
                <div className="w-[54px] h-[23px] flex items-center justify-between pl-[9px] pr-[7px] pt-1">P2<Arrow className="text-black"/></div>
                <div className="w-[54px] h-[23px] mr-px border border-t-[#7f8ba0] border-l-[#7f8ba0] border-white text-center">广域网</div>
                <div className="w-[45px] h-[23px] mr-px border border-t-[#7f8ba0] border-l-[#7f8ba0] border-white text-center">CAM</div>
                <div className="w-[54px] h-[23px] mr-px border border-t-[#7f8ba0] border-l-[#7f8ba0] border-white text-center">汪朝文</div>
                <div className="flex-1 h-[23px] border-t border-l border-b border-t-[#7f8ba0] border-l-[#7f8ba0] border-b-white"/>
            </div>

            <Taskbar/>

            <ExcelWindow/>
            <ImeBar/>

            {/* Annotations over the windows */}
            <div className="absolute left-[695px] top-[526px] w-[209px] h-[90px] bg-white border-3 border-[#0000d8] pl-[14px] pt-[3px] text-[17px] leading-[24px] font-medium text-[#e0127c] whitespace-nowrap">金手指金厚按规定填写</div>
            <div className="absolute left-[1206px] top-[475px] w-[243px] h-[56px] border-3 border-[#25d81e] shadow-[2px_3px_4px_rgba(0,0,0,0.45),inset_2px_3px_4px_rgba(0,0,0,0.35)]"/>
            <div className="absolute left-[1901px] top-[864px] w-[46px] h-[46px] rounded-full border-2 border-[#e8f5e8] bg-gradient-to-b from-[#7fdc90] via-[#35b558] to-[#3fc765] shadow-[0_1px_4px_rgba(0,0,0,0.7)] text-white text-[13px] leading-[42px] pl-[3px] font-bold font-['Liberation_Sans',sans-serif]">57</div>
        </div>
    );
}
